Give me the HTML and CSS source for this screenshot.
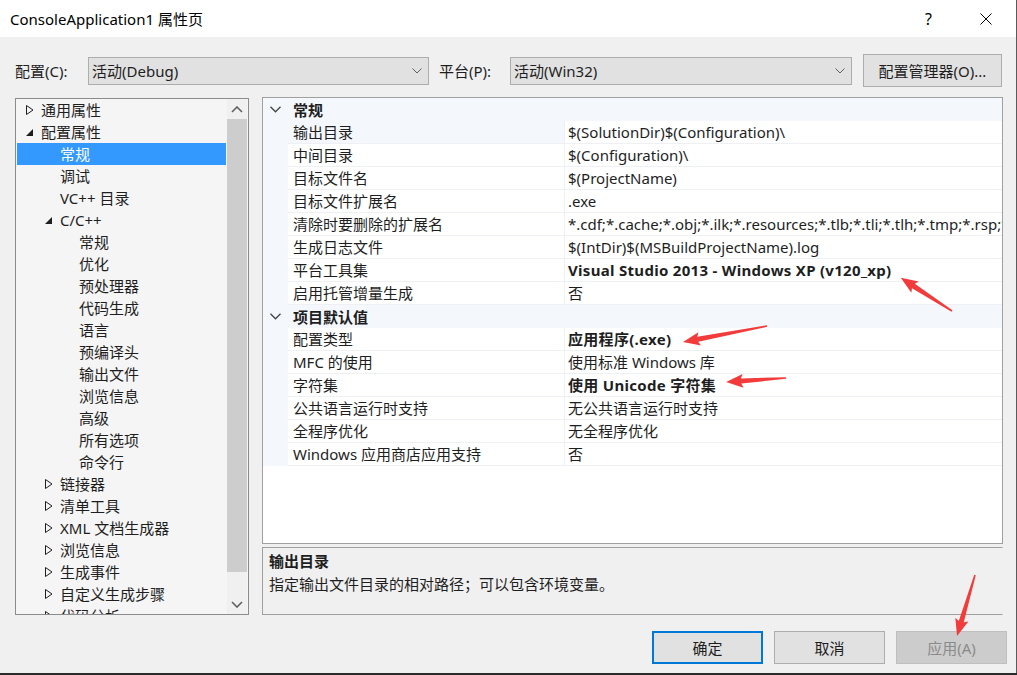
FILE: index.html
```html
<!DOCTYPE html>
<html>
<head>
<meta charset="utf-8">
<title>ConsoleApplication1 属性页</title>
<link rel="stylesheet" href="styles.css">
</head>
<body>

<div class="window">

<div class="titlebar">
<div class="title">ConsoleApplication1 属性页</div>
<div class="help">?</div>
<div class="close">
<svg width="12" height="12" viewBox="0 0 12 12"><path d="M0.5 0.5 L11.5 11.5 M11.5 0.5 L0.5 11.5" stroke="#000" stroke-width="1" fill="none"/></svg>
</div>
</div>

<div class="configrow">
<span class="label">配置(C):</span>
<div class="combo combo-config">
<span>活动(Debug)</span>
<svg class="chev" width="10" height="6" viewBox="0 0 10 6"><polyline points="0.5,0.5 5,5 9.5,0.5" stroke="#606060" fill="none"/></svg>
</div>
<span class="label label-platform">平台(P):</span>
<div class="combo combo-platform">
<span>活动(Win32)</span>
<svg class="chev" width="10" height="6" viewBox="0 0 10 6"><polyline points="0.5,0.5 5,5 9.5,0.5" stroke="#606060" fill="none"/></svg>
</div>
<button class="btn btn-manager">配置管理器(O)...</button>
</div>

<div class="main">

<div class="tree">
<div class="treelist">
<div class="node l0"><span class="tw"><svg width="8" height="10" viewBox="0 0 8 10"><polygon points="0.5,0.5 7,5 0.5,9.5" fill="none" stroke="#1e1e1e"/></svg></span>通用属性</div>
<div class="node l0"><span class="tw"><svg width="8" height="10" viewBox="0 0 8 10"><polygon points="7,2 7,9 0,9" fill="#1e1e1e"/></svg></span>配置属性</div>
<div class="node l1 selected"><span class="tw"></span>常规</div>
<div class="node l1"><span class="tw"></span>调试</div>
<div class="node l1"><span class="tw"></span>VC++ 目录</div>
<div class="node l1"><span class="tw"><svg width="8" height="10" viewBox="0 0 8 10"><polygon points="7,2 7,9 0,9" fill="#1e1e1e"/></svg></span>C/C++</div>
<div class="node l2"><span class="tw"></span>常规</div>
<div class="node l2"><span class="tw"></span>优化</div>
<div class="node l2"><span class="tw"></span>预处理器</div>
<div class="node l2"><span class="tw"></span>代码生成</div>
<div class="node l2"><span class="tw"></span>语言</div>
<div class="node l2"><span class="tw"></span>预编译头</div>
<div class="node l2"><span class="tw"></span>输出文件</div>
<div class="node l2"><span class="tw"></span>浏览信息</div>
<div class="node l2"><span class="tw"></span>高级</div>
<div class="node l2"><span class="tw"></span>所有选项</div>
<div class="node l2"><span class="tw"></span>命令行</div>
<div class="node l1"><span class="tw"><svg width="8" height="10" viewBox="0 0 8 10"><polygon points="0.5,0.5 7,5 0.5,9.5" fill="none" stroke="#1e1e1e"/></svg></span>链接器</div>
<div class="node l1"><span class="tw"><svg width="8" height="10" viewBox="0 0 8 10"><polygon points="0.5,0.5 7,5 0.5,9.5" fill="none" stroke="#1e1e1e"/></svg></span>清单工具</div>
<div class="node l1"><span class="tw"><svg width="8" height="10" viewBox="0 0 8 10"><polygon points="0.5,0.5 7,5 0.5,9.5" fill="none" stroke="#1e1e1e"/></svg></span>XML 文档生成器</div>
<div class="node l1"><span class="tw"><svg width="8" height="10" viewBox="0 0 8 10"><polygon points="0.5,0.5 7,5 0.5,9.5" fill="none" stroke="#1e1e1e"/></svg></span>浏览信息</div>
<div class="node l1"><span class="tw"><svg width="8" height="10" viewBox="0 0 8 10"><polygon points="0.5,0.5 7,5 0.5,9.5" fill="none" stroke="#1e1e1e"/></svg></span>生成事件</div>
<div class="node l1"><span class="tw"><svg width="8" height="10" viewBox="0 0 8 10"><polygon points="0.5,0.5 7,5 0.5,9.5" fill="none" stroke="#1e1e1e"/></svg></span>自定义生成步骤</div>
<div class="node l1"><span class="tw"><svg width="8" height="10" viewBox="0 0 8 10"><polygon points="0.5,0.5 7,5 0.5,9.5" fill="none" stroke="#1e1e1e"/></svg></span>代码分析</div>
</div>
<div class="scrollbar">
<div class="sb-btn"><svg width="12" height="7" viewBox="0 0 12 7"><polyline points="1,6 6,1 11,6" stroke="#606060" stroke-width="1.6" fill="none"/></svg></div>
<div class="sb-track"><div class="sb-thumb"></div></div>
<div class="sb-btn"><svg width="12" height="7" viewBox="0 0 12 7"><polyline points="1,1 6,6 11,1" stroke="#606060" stroke-width="1.6" fill="none"/></svg></div>
</div>
</div>

<div class="rightcol">

<div class="grid">
<div class="pcat"><svg class="catchev" width="11" height="7" viewBox="0 0 11 7"><polyline points="0.5,0.8 5.5,5.8 10.5,0.8" stroke="#444" stroke-width="1.3" fill="none"/></svg><span>常规</span></div>
<div class="prow current"><div class="gut"></div><div class="pname">输出目录</div><div class="pval">$(SolutionDir)$(Configuration)\</div></div>
<div class="prow"><div class="gut"></div><div class="pname">中间目录</div><div class="pval">$(Configuration)\</div></div>
<div class="prow"><div class="gut"></div><div class="pname">目标文件名</div><div class="pval">$(ProjectName)</div></div>
<div class="prow"><div class="gut"></div><div class="pname">目标文件扩展名</div><div class="pval">.exe</div></div>
<div class="prow"><div class="gut"></div><div class="pname">清除时要删除的扩展名</div><div class="pval">*.cdf;*.cache;*.obj;*.ilk;*.resources;*.tlb;*.tli;*.tlh;*.tmp;*.rsp;*.pgc;*.pgd;*.meta;*.tlog;*.manifest;*.res;*.pch;*.exp;*.idb;*.rep;*.xdc;*.pdb;*_manifest.rc;*.bsc;*.sbr;*.xml;*.metagen;*.bi</div></div>
<div class="prow"><div class="gut"></div><div class="pname">生成日志文件</div><div class="pval">$(IntDir)$(MSBuildProjectName).log</div></div>
<div class="prow"><div class="gut"></div><div class="pname">平台工具集</div><div class="pval bold">Visual Studio 2013 - Windows XP (v120_xp)</div></div>
<div class="prow"><div class="gut"></div><div class="pname">启用托管增量生成</div><div class="pval">否</div></div>
<div class="pcat"><svg class="catchev" width="11" height="7" viewBox="0 0 11 7"><polyline points="0.5,0.8 5.5,5.8 10.5,0.8" stroke="#444" stroke-width="1.3" fill="none"/></svg><span>项目默认值</span></div>
<div class="prow"><div class="gut"></div><div class="pname">配置类型</div><div class="pval bold">应用程序(.exe)</div></div>
<div class="prow"><div class="gut"></div><div class="pname">MFC 的使用</div><div class="pval">使用标准 Windows 库</div></div>
<div class="prow"><div class="gut"></div><div class="pname">字符集</div><div class="pval bold">使用 Unicode 字符集</div></div>
<div class="prow"><div class="gut"></div><div class="pname">公共语言运行时支持</div><div class="pval">无公共语言运行时支持</div></div>
<div class="prow"><div class="gut"></div><div class="pname">全程序优化</div><div class="pval">无全程序优化</div></div>
<div class="prow"><div class="gut"></div><div class="pname">Windows 应用商店应用支持</div><div class="pval">否</div></div>
</div>

<div class="desc">
<div class="desc-title">输出目录</div>
<div class="desc-text">指定输出文件目录的相对路径；可以包含环境变量。</div>
</div>

</div>
</div>

<div class="footer">
<button class="btn btn-ok">确定</button>
<button class="btn btn-cancel">取消</button>
<button class="btn btn-apply">应用(A)</button>
</div>

<svg class="marks" width="1017" height="675" viewBox="0 0 1017 675">
<g fill="#f23b3b">
<polygon transform="translate(952,311) rotate(212.9)" points="0,-0.8 46,-2.6 44,-6.8 61,0 44,6.8 46,2.6 0,0.8"/>
<polygon transform="translate(767,326) rotate(169.2)" points="0,-0.8 70.5,-2.6 68.5,-6.8 85.5,0 68.5,6.8 70.5,2.6 0,0.8"/>
<polygon transform="translate(786,378) rotate(176.2)" points="0,-0.8 45,-2.6 43,-6.8 60,0 43,6.8 45,2.6 0,0.8"/>
<polygon transform="translate(975,575) rotate(106.4)" points="0,-0.8 48.6,-2.6 46.6,-6.8 63.6,0 46.6,6.8 48.6,2.6 0,0.8"/>
</g>
</svg>

</div>

</body>
</html>
```

FILE: styles.css
```css
body{
margin:0;
background:#2b2b2b;
font-family:"Noto Sans","Noto Sans CJK SC",sans-serif;
font-size:15px;
color:#1e1e1e;
}

.window{
position:relative;
width:1016px;
height:673px;
background:#f0f0f0;
border-right:1px solid #5a5a5a;
overflow:hidden;
}

/* title bar */
.titlebar{
height:37px;
background:#fff;
display:flex;
align-items:center;
}

.title{
flex:1;
padding-left:10px;
font-size:15px;
color:#000;
}

.help{
width:20px;
font-size:16px;
color:#000;
margin-right:35px;
}

.close{
width:12px;
height:12px;
margin-right:24px;
display:flex;
}

/* config row */
.configrow{
display:flex;
align-items:center;
height:31px;
margin-top:18px;
padding-left:15px;
}

.label{
width:73px;
}

.label-platform{
width:71px;
margin-left:10px;
}

.combo{
box-sizing:border-box;
height:28px;
background:#e1e1e1;
border:1px solid #adadad;
display:flex;
align-items:center;
justify-content:space-between;
padding:0 6px 0 3px;
}

.combo-config{
width:341px;
}

.combo-platform{
width:342px;
}

.btn{
box-sizing:border-box;
font-family:inherit;
font-size:15px;
color:#1e1e1e;
background:#e1e1e1;
border:1px solid #adadad;
padding:0;
}

.btn-manager{
width:139px;
height:33px;
margin-left:11px;
}

/* main area */
.main{
display:flex;
margin-top:11px;
}

.tree{
box-sizing:border-box;
width:234px;
height:517px;
margin-left:15px;
margin-top:1px;
border:1px solid #8c8c8c;
background:#f5f5f5;
display:flex;
overflow:hidden;
}

.treelist{
flex:1;
padding-left:1px;
margin-right:1px;
overflow:hidden;
}

.node{
height:22px;
line-height:22px;
display:flex;
align-items:center;
white-space:nowrap;
}

.node.l0{ padding-left:9px; }
.node.l1{ padding-left:28px; }
.node.l2{ padding-left:47px; }

.tw{
width:15px;
flex:none;
display:flex;
align-items:center;
}

.node.selected{
background:#3399ff;
color:#fff;
}

.scrollbar{
width:20px;
margin-right:1px;
display:flex;
flex-direction:column;
background:#f0f0f0;
}

.sb-btn{
height:20px;
display:flex;
align-items:center;
justify-content:center;
}

.sb-track{
flex:1;
}

.sb-thumb{
height:453px;
background:#cdcdcd;
}

.rightcol{
margin-left:13px;
width:741px;
}

.grid{
box-sizing:border-box;
height:447px;
border:1px solid #a0a0a0;
background:#fff;
overflow:hidden;
}

.pcat{
height:23px;
background:#f4f7fc;
display:flex;
align-items:center;
font-weight:bold;
}

.catchev{
margin-left:7px;
margin-right:12px;
}

.prow{
display:flex;
height:23px;
}

.gut{
width:25px;
flex:none;
background:#f4f7fc;
}

.pname{
box-sizing:border-box;
width:277px;
flex:none;
padding-left:5px;
line-height:22px;
border-bottom:1px solid #eef0f4;
border-right:1px solid #eef0f4;
white-space:nowrap;
overflow:hidden;
}

.prow.current .pname{
background:#f4f7fc;
}

.pval{
flex:1;
padding-left:3px;
line-height:22px;
border-bottom:1px solid #eef0f4;
white-space:nowrap;
overflow:hidden;
}

.bold{
font-weight:bold;
letter-spacing:0.3px;
}

.desc{
box-sizing:border-box;
height:68px;
margin-top:3px;
border:1px solid #a0a0a0;
border-right-color:#f0f0f0;
padding:1px 6px;
}

.desc-title{
font-weight:bold;
line-height:24px;
}

.desc-text{
line-height:22px;
}

/* footer buttons */
.footer{
display:flex;
justify-content:flex-end;
margin-top:16px;
padding-right:9px;
gap:11px;
}

.footer .btn{
width:111px;
height:33px;
}

.btn-ok{
border:2px solid #0078d7;
}

.btn-apply{
background:#cccccc;
border-color:#bfbfbf;
color:#8a8a8a;
}

.marks{
position:absolute;
left:0;
top:0;
pointer-events:none;
}
```
